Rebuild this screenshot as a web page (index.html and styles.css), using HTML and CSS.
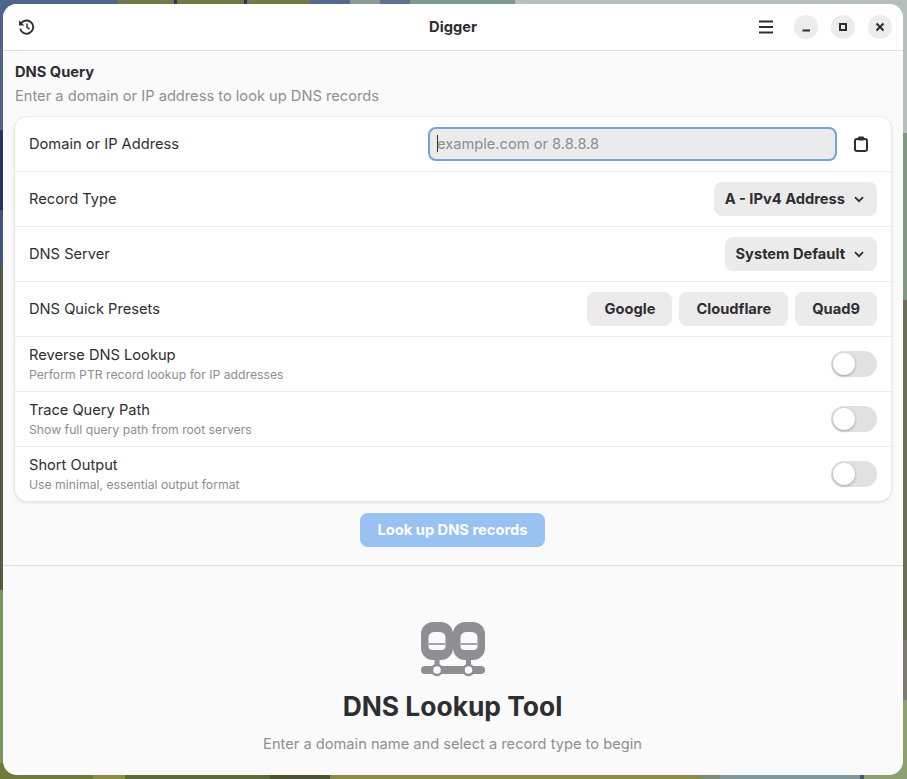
FILE: index.html
```html
<!DOCTYPE html>
<html lang="en">
<head>
  <meta charset="UTF-8">
  <title>Digger</title>
  <link rel="stylesheet" href="styles.css">
</head>
<body>
  <div class="window">
    <header class="titlebar">
      <div class="titlebar-start">
        <svg class="icon" width="17" height="16" viewBox="0 0 17 16">
          <path d="M3 4.6A6.6 6.6 0 1 1 2.2 9.6" fill="none" stroke="#2e2e32" stroke-width="1.9"/>
          <path d="M1 1.2V6.6H6.4Z" fill="#2e2e32"/>
          <path d="M9 4.4V8.3L11.6 10.2" fill="none" stroke="#2e2e32" stroke-width="1.5"/>
        </svg>
      </div>
      <div class="titlebar-title">Digger</div>
      <div class="titlebar-end">
        <svg class="icon menu-icon" width="16" height="14" viewBox="0 0 16 14">
          <path d="M1 1.5H15M1 7H15M1 12.5H15" fill="none" stroke="#2e2e32" stroke-width="2"/>
        </svg>
        <div class="win-btn">
          <svg width="10" height="10" viewBox="0 0 10 10"><path d="M1.5 8.5H9" stroke="#2e2e32" stroke-width="2"/></svg>
        </div>
        <div class="win-btn">
          <svg width="10" height="10" viewBox="0 0 10 10"><rect x="2" y="2" width="6" height="6" fill="none" stroke="#2e2e32" stroke-width="2"/></svg>
        </div>
        <div class="win-btn">
          <svg width="10" height="10" viewBox="0 0 10 10"><path d="M1.5 1.5L8.5 8.5M8.5 1.5L1.5 8.5" stroke="#2e2e32" stroke-width="2"/></svg>
        </div>
      </div>
    </header>

    <main class="content">
      <section class="query">
        <h2 class="group-title">DNS Query</h2>
        <p class="group-desc">Enter a domain or IP address to look up DNS records</p>

        <div class="card">
          <div class="row row-first">
            <span class="row-label">Domain or IP Address</span>
            <div class="row-controls">
              <div class="entry"><span class="caret"></span><span class="placeholder">example.com or 8.8.8.8</span></div>
              <svg class="paste-icon" width="16" height="16" viewBox="0 0 16 16">
                <rect x="2" y="3" width="12" height="12" rx="2" fill="none" stroke="#2e2e32" stroke-width="2"/>
                <rect x="5" y="0.5" width="6" height="4" rx="1" fill="#2e2e32"/>
              </svg>
            </div>
          </div>
          <div class="row">
            <span class="row-label">Record Type</span>
            <div class="btn dropdown">A - IPv4 Address
              <svg class="chevron" width="10" height="7" viewBox="0 0 10 7"><path d="M1 1.2L5 5.2L9 1.2" fill="none" stroke="#2e2e32" stroke-width="1.8"/></svg>
            </div>
          </div>
          <div class="row">
            <span class="row-label">DNS Server</span>
            <div class="btn dropdown">System Default
              <svg class="chevron" width="10" height="7" viewBox="0 0 10 7"><path d="M1 1.2L5 5.2L9 1.2" fill="none" stroke="#2e2e32" stroke-width="1.8"/></svg>
            </div>
          </div>
          <div class="row">
            <span class="row-label">DNS Quick Presets</span>
            <div class="presets">
              <div class="btn">Google</div>
              <div class="btn">Cloudflare</div>
              <div class="btn">Quad9</div>
            </div>
          </div>
          <div class="row">
            <div class="row-text">
              <span class="row-label">Reverse DNS Lookup</span>
              <span class="row-sub">Perform PTR record lookup for IP addresses</span>
            </div>
            <div class="switch"><span class="knob"></span></div>
          </div>
          <div class="row">
            <div class="row-text">
              <span class="row-label">Trace Query Path</span>
              <span class="row-sub">Show full query path from root servers</span>
            </div>
            <div class="switch"><span class="knob"></span></div>
          </div>
          <div class="row">
            <div class="row-text">
              <span class="row-label">Short Output</span>
              <span class="row-sub">Use minimal, essential output format</span>
            </div>
            <div class="switch"><span class="knob"></span></div>
          </div>
        </div>

        <div class="lookup-wrap">
          <div class="lookup">Look up DNS records</div>
        </div>
      </section>

      <section class="status">
        <svg class="status-icon" width="64" height="56" viewBox="0 0 64 56">
          <g fill="#8f8f93" fill-rule="evenodd">
            <path d="M12 0H20A12 12 0 0 1 32 12V26A12 12 0 0 1 20 38H12A12 12 0 0 1 0 26V12A12 12 0 0 1 12 0ZM13 10A5.500 5.500 0 0 0 7.500 15.500V24A4 4 0 0 0 11.500 28H20.500A4 4 0 0 0 24.500 24V15.500A5.500 5.500 0 0 0 19 10Z"/>
            <path d="M44 0H52A12 12 0 0 1 64 12V26A12 12 0 0 1 52 38H44A12 12 0 0 1 32 26V12A12 12 0 0 1 44 0ZM45 10A5.500 5.500 0 0 0 39.500 15.500V24A4 4 0 0 0 43.500 28H52.500A4 4 0 0 0 56.500 24V15.500A5.500 5.500 0 0 0 51 10Z"/>
          </g>
          <path d="M7.500 22H24.500M39.500 22H56.500" stroke="#a4a4a7" stroke-width="2"/>
          <path d="M16 36V46M47.500 36V46" stroke="#8f8f93" stroke-width="5"/>
          <path d="M4 48H60" stroke="#8f8f93" stroke-width="8" stroke-linecap="round"/>
          <circle cx="16" cy="48" r="5" fill="#fafafa" stroke="#8f8f93" stroke-width="2.500"/>
          <circle cx="47.500" cy="48" r="5" fill="#fafafa" stroke="#8f8f93" stroke-width="2.500"/>
        </svg>
        <h1 class="status-title">DNS Lookup Tool</h1>
        <p class="status-desc">Enter a domain name and select a record type to begin</p>
      </section>
    </main>
  </div>
</body>
</html>
```

FILE: styles.css
```css
*{
  margin: 0;
  padding: 0;
  box-sizing: border-box;
}

html, body{
  height: 100%;
}

body{
  padding: 4px 4px 4px 3px;
  overflow: hidden;
  font-family: Inter, "Liberation Sans", sans-serif;
  font-size: 14.67px;
  color: #2e2e32;
  /* wallpaper, only its edges show round the window */
  background:
    linear-gradient(90deg, #4f6488 0 118px, #707a48 118px 174px, #24355f 174px 177px, #707a48 177px 244px, #24355f 244px 247px, #707a48 247px 310px, #56688e 310px 350px, #8b9c98 350px 380px, #5f7090 380px 410px, #7e9a8c 410px 515px, #b6bfba 515px) top / 100% 16px no-repeat,
    linear-gradient(90deg, #6d7a3a 0 93px, #8b8a4a 93px 125px, #5c6a36 125px 270px, #4a5530 270px 330px, #8b8a4a 330px 700px, #7a8f70 700px 720px, #7a9a9c 720px 860px, #3f5a70 860px 864px, #8ba070 864px) bottom / 100% 16px no-repeat,
    linear-gradient(180deg, #4f6488 0 130px, #24355f 130px 210px, #3f5480 210px 265px, #505f40 265px 590px, #7d9460 590px 779px) left / 3px 100% no-repeat,
    linear-gradient(180deg, #b6bfba 0 133px, #7e9a7c 133px 300px, #6c7050 300px 640px, #7d7b6c 640px 700px, #8ba070 700px) right / 4px 100% no-repeat;
}

.window{
  height: 100%;
  display: flex;
  flex-direction: column;
  border-radius: 14px;
  overflow: hidden;
  background: #fafafa;
}

/* header */
.titlebar{
  height: 47px;
  flex: none;
  display: flex;
  align-items: center;
  justify-content: space-between;
  position: relative;
  padding: 0 11px 0 15px;
  background: #fff;
  border-bottom: 1px solid #dfdfdf;
}

.titlebar-title{
  position: absolute;
  left: 0;
  right: 0;
  text-align: center;
  font-weight: 700;
  pointer-events: none;
}

.titlebar-start{
  display: flex;
  align-items: center;
}

.icon{
  display: block;
}

.titlebar-end{
  display: flex;
  align-items: center;
  gap: 13px;
}

.menu-icon{
  margin-right: 7px;
}

.win-btn{
  width: 24px;
  height: 24px;
  border-radius: 50%;
  background: #ececec;
  display: flex;
  align-items: center;
  justify-content: center;
}

/* query form */
.content{
  flex: 1;
  display: flex;
  flex-direction: column;
}

.query{
  padding: 13px 12px 18px;
  border-bottom: 1px solid #dfdfdf;
}

.group-title{
  font-size: 14.67px;
  line-height: 17px;
  font-weight: 700;
}

.group-desc{
  margin-top: 6px;
  line-height: 18px;
  color: #8f8f92;
}

.card{
  margin-top: 12px;
  border-radius: 12px;
  background: #fff;
  box-shadow: 0 0 0 1px rgba(0,0,0,0.02), 0 1px 3px 1px rgba(0,0,0,0.09);
}

.row{
  height: 55px;
  display: flex;
  align-items: center;
  justify-content: space-between;
  padding: 0 14px;
  border-top: 1px solid #ebebeb;
}

.row-first{
  height: 54px;
  border-top: 0;
}

.row-label{
  line-height: 18px;
}

.row-controls{
  display: flex;
  align-items: center;
}

.entry{
  width: 409px;
  height: 34px;
  display: flex;
  align-items: center;
  padding: 0 0 1px 7px;
  border-radius: 8px;
  border: 2px solid #72a4d8;
  background: #ebebeb;
}

.caret{
  width: 1px;
  height: 17px;
  margin-right: -1px;
  background: #2e2e32;
}

.placeholder{
  color: #8e8e90;
}

.paste-icon{
  margin: 0 8px 0 16px;
}

.btn{
  height: 34px;
  display: flex;
  align-items: center;
  padding: 0 17px 1px;
  border-radius: 8px;
  background: #ebebeb;
  font-weight: 700;
}

.dropdown{
  padding: 0 13px 1px 11px;
}

.chevron{
  margin-left: 9px;
  margin-top: 2px;
}

.presets{
  display: flex;
  gap: 7px;
}

.row-text{
  display: flex;
  flex-direction: column;
  padding-bottom: 1px;
}

.row-text .row-label{
  line-height: 19px;
}

.row-sub{
  margin-top: 3px;
  font-size: 12.22px;
  line-height: 14px;
  color: #8e8e90;
}

.switch{
  width: 46px;
  height: 26px;
  padding: 2px;
  border-radius: 13px;
  background: #e1e1e1;
}

.knob{
  display: block;
  width: 22px;
  height: 22px;
  border-radius: 50%;
  background: #fff;
  box-shadow: 0 1px 3px rgba(0,0,0,0.3);
}

.lookup-wrap{
  margin-top: 12px;
  padding-right: 1px;
  display: flex;
  justify-content: center;
}

.lookup{
  width: 185px;
  height: 34px;
  line-height: 34px;
  text-align: center;
  border-radius: 8px;
  background: #99c1f1;
  color: #fff;
  font-weight: 700;
}

/* empty state */
.status{
  flex: 1;
  display: flex;
  flex-direction: column;
  align-items: center;
  padding: 56px 1px 0 0;
}

.status-icon{
  margin-left: 1px;
}

.status-title{
  margin-top: 11px;
  font-size: 26.4px;
  line-height: 34px;
  font-weight: 700;
}

.status-desc{
  margin-top: 12px;
  line-height: 18px;
  color: #8f8f92;
}
```
